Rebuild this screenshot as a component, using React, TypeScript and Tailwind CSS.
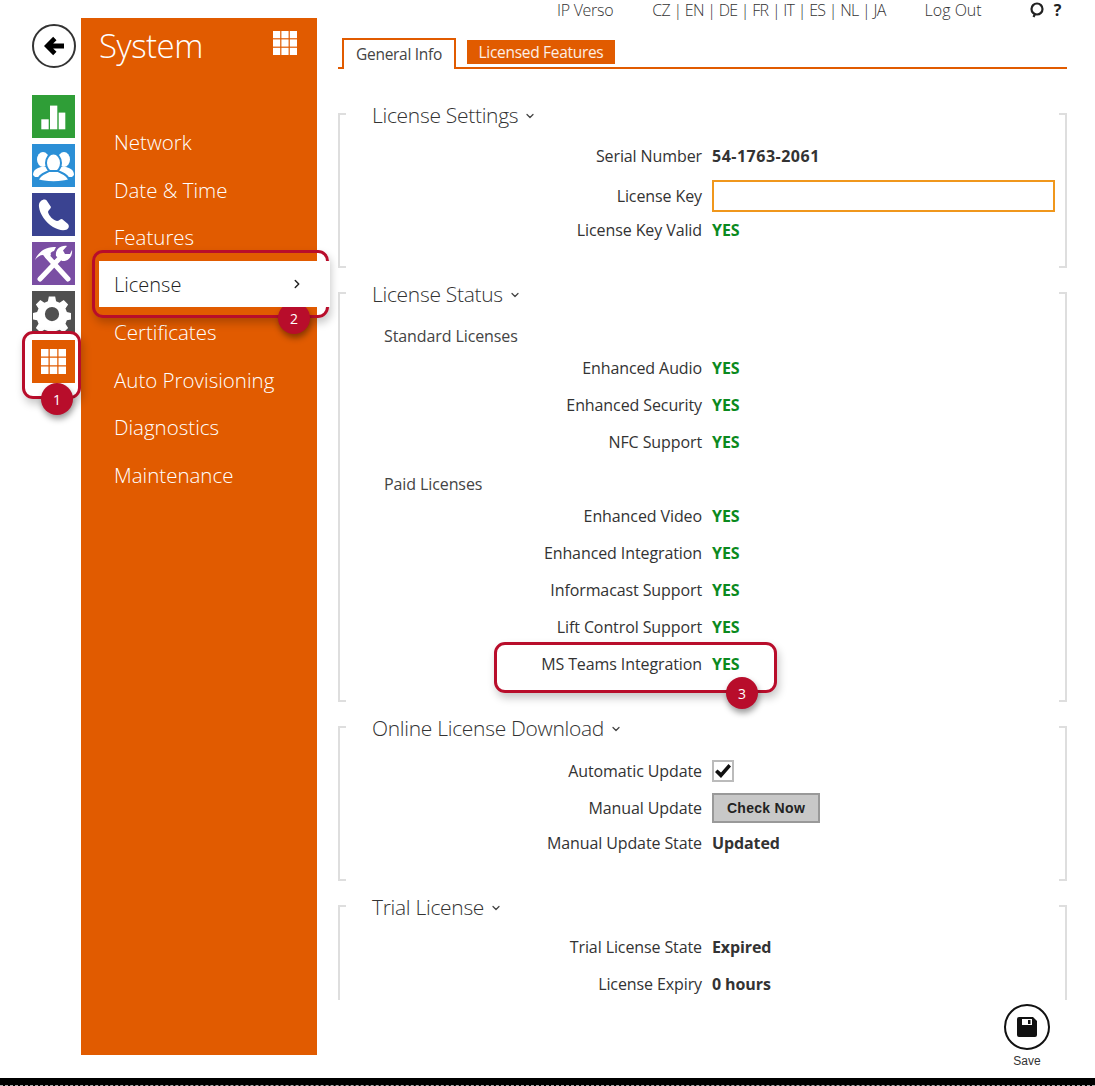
import React from 'react';
import { ChevronDown, ChevronRight } from 'lucide-react';

const FONT = "font-['Open_Sans','Noto_Sans',sans-serif]";

const GridIcon = ({ size }: { size: number }) => (
  <svg width={size} height={size} viewBox="0 0 24 24" fill="#fff">
    {[0, 8.4, 16.8].map((y) =>
      [0, 8.4, 16.8].map((x) => <rect key={`${x}-${y}`} x={x} y={y} width="7.2" height="7.2" />),
    )}
  </svg>
);

const Badge = ({ n, className }: { n: number; className: string }) => (
  <div
    className={`absolute flex h-8 w-8 items-center justify-center rounded-full bg-[#b80d2b] text-[14px] text-white shadow-[1px_4px_6px_rgba(0,0,0,0.4)] ${className}`}
  >
    {n}
  </div>
);

const Callout = ({ className }: { className: string }) => (
  <div
    className={`absolute rounded-[11px] border-[3px] border-[#b80d2b] shadow-[2px_5px_8px_rgba(0,0,0,0.22)] ${className}`}
  />
);

const Row = ({ label, value, h = 37 }: { label: string; value?: React.ReactNode; h?: number }) => (
  <div className="flex items-center" style={{ height: h }}>
    <div className="w-[372px] pr-[10px] text-right text-[16px] tracking-[-0.1px] text-[#333]">{label}</div>
    <div className="flex-1 text-[16px] font-bold tracking-[-0.1px] text-[#333]">{value}</div>
  </div>
);

const Yes = () => <span className="text-[#0b8a1e]">YES</span>;

const Section = ({
  title,
  height,
  ticks = true,
  children,
}: {
  title: string;
  height: number;
  ticks?: boolean;
  children: React.ReactNode;
}) => (
  <div className="relative border-x-2 border-[#dedede]" style={{ height }}>
    <div className="absolute left-0 top-0 h-[2px] w-[6px] bg-[#dedede]" />
    <div className="absolute right-0 top-0 h-[2px] w-[6px] bg-[#dedede]" />
    {ticks && (
      <>
        <div className="absolute bottom-0 left-0 h-[2px] w-[6px] bg-[#dedede]" />
        <div className="absolute bottom-0 right-0 h-[2px] w-[6px] bg-[#dedede]" />
      </>
    )}
    <div className="-mt-[8px] flex items-center pl-[32px] text-[21px] font-light leading-[20px] tracking-[-0.3px] text-[#333]">
      {title}
      <ChevronDown size={12} strokeWidth={2.5} className="ml-[6px] mt-[1px] text-[#444]" />
    </div>
    {children}
  </div>
);

const SideIcon = ({ color, children }: { color: string; children: React.ReactNode }) => (
  <div className={`flex h-[43px] w-[43px] items-center justify-center ${color}`}>{children}</div>
);

const nav = ['Network', 'Date & Time', 'Features', 'License', 'Certificates', 'Auto Provisioning', 'Diagnostics', 'Maintenance'];

export default function App() {
  return (
    <div className={`relative flex h-[1086px] w-[1095px] flex-col overflow-hidden bg-white ${FONT}`}>
      <div className="flex flex-1">
        {/* icon rail */}
        <div className="flex w-[81px] flex-col items-start pl-[32px] pt-[24px]">
          <div className="flex h-[44px] w-[44px] items-center justify-center rounded-full border-2 border-[#333]">
            <svg width="22" height="20" viewBox="0 0 26 24" fill="#000">
              <path d="M12 1 L16 5 L12 9 H25 V15 H12 L16 19 L12 23 L1 12 Z" />
            </svg>
          </div>
          <div className="mt-[27px] flex flex-col gap-[6px]">
            <SideIcon color="bg-[#2f9e37]">
              <svg width="43" height="43" viewBox="0 0 43 43" fill="#fff">
                <rect x="9.3" y="24.3" width="7.4" height="10" />
                <rect x="18" y="10.6" width="7.3" height="23.7" />
                <rect x="26.7" y="17.6" width="6.6" height="16.7" />
              </svg>
            </SideIcon>
            <SideIcon color="bg-[#2b8fd6]">
              <svg width="43" height="43" viewBox="0 0 43 43" fill="#fff">
                <ellipse cx="11" cy="15.5" rx="6" ry="7.5" />
                <ellipse cx="32" cy="15.5" rx="6" ry="7.5" />
                <path d="M1 31c0-5 4-7 8-8h5l4 6-4 4H3z" />
                <path d="M42 31c0-5-4-7-8-8h-5l-4 6 4 4h11z" />
                <ellipse cx="21.5" cy="19" rx="7.5" ry="9.5" stroke="#2b8fd6" strokeWidth="2" />
                <path d="M6 36c1-6 8-7 11-9h9c3 2 10 3 11 9-6 3-25 3-31 0z" stroke="#2b8fd6" strokeWidth="2" />
              </svg>
            </SideIcon>
            <SideIcon color="bg-[#3a4391]">
              <svg width="43" height="43" viewBox="0 0 43 43" fill="#fff">
                <path d="M9 8C11 6 14 6 15 8L19 14C19 16 16 17 16 19C17 23 21 27 25 28C27 28 28 26 30 26L36 31C37.5 33 37 35 35 36.5C31 38 26 37 21 34C13 29 8 21 7 14C6.5 11 7.5 9 9 8Z" />
              </svg>
            </SideIcon>
            <SideIcon color="bg-[#7a4ea3]">
              <svg width="43" height="43" viewBox="0 0 43 43" fill="#fff">
                <path d="M3 18C6 10 14 4 24 5L22 9C19 10 18 11 19 13L15 17L11 13C8 13 5 15 3 18Z" />
                <path d="M15 14L36 37M8 37L27 17" stroke="#fff" strokeWidth="5" strokeLinecap="round" />
                <path d="M24 14C23 8 28 3 35 4L31 8.5L33 12L38 12L40 8C41 14 36 20 30 19Z" />
              </svg>
            </SideIcon>
            <SideIcon color="bg-[#505050]">
              <svg width="38" height="38" viewBox="0 0 24 24" fill="#fff" fillRule="evenodd" className="-ml-[3px] mt-[3px]">
                <path d="M10 1h4l.6 3 2.2.9 2.6-1.7 2.8 2.8-1.7 2.6.9 2.2 3 .6v4l-3 .6-.9 2.2 1.7 2.6-2.8 2.8-2.6-1.7-2.2.9-.6 3h-4l-.6-3-2.2-.9-2.6 1.7-2.8-2.8 1.7-2.6-.9-2.2-3-.6v-4l3-.6.9-2.2-1.7-2.6 2.8-2.8 2.6 1.7 2.2-.9zM12 7.5a4.5 4.5 0 1 0 0 9 4.5 4.5 0 0 0 0-9z" />
              </svg>
            </SideIcon>
            <SideIcon color="bg-[#e15b00]">
              <GridIcon size={25} />
            </SideIcon>
          </div>
        </div>

        {/* orange menu */}
        <div className="mt-[18px] flex h-[1037px] w-[236px] flex-col bg-[#e15b00] text-white">
          <div className="flex h-[56px] items-center justify-between pl-[18px] pr-[20px]">
            <span className="text-[33px] font-light tracking-[-0.5px]">System</span>
            <div className="-mt-[6px]">
              <GridIcon size={24} />
            </div>
          </div>
          <div className="mt-[44px] flex flex-col pl-[18px]">
            {nav.map((item) =>
              item === 'License' ? (
                <div
                  key={item}
                  className="relative z-10 mb-[1.5px] flex h-[46px] w-[231px] items-center justify-between bg-white pl-[15px] pr-[26px] pt-[2px] text-[20px] font-light text-[#222]"
                >
                  {item}
                  <ChevronRight size={14} strokeWidth={2.5} className="-mt-[2px] text-[#222]" />
                </div>
              ) : (
                <div key={item} className="flex h-[47.5px] items-center pl-[15px] pt-[2px] text-[20.5px] font-light">
                  {item}
                </div>
              ),
            )}
          </div>
        </div>

        {/* content */}
        <div className="relative flex flex-1 flex-col pl-[21px] pr-[28px]">
          <div className="-mt-[1px] flex h-[21px] items-center justify-end text-[16px] font-light tracking-[-0.3px] text-[#333]">
            <span>IP Verso</span>
            <span className="ml-[39px] tracking-[-0.7px]">CZ | EN | DE | FR | IT | ES | NL | JA</span>
            <span className="ml-[39px] tracking-normal">Log Out</span>
            <svg width="16" height="16" viewBox="0 0 16 16" fill="none" stroke="#222" strokeWidth="2.2" className="ml-[47px]">
              <circle cx="8" cy="7" r="5.5" />
              <path d="M6 12l-1.5 3" />
            </svg>
            <span className="ml-[9px] mr-[6px] font-bold text-[#222]">?</span>
          </div>

          <div className="mt-[18px] flex h-[31px] items-end border-b-2 border-[#e15b00] pl-[4px]">
            <div className="relative -mb-[2px] flex h-[31px] w-[114px] items-center justify-center border-2 border-b-0 border-[#e15b00] bg-white text-[15.5px] tracking-[-0.3px] text-[#444]">
              General Info
            </div>
            <div className="mb-[3px] ml-[11px] flex h-[24px] w-[148px] items-center justify-center bg-[#e15b00] pt-[2px] text-[15.5px] tracking-[-0.3px] text-white/90">
              Licensed Features
            </div>
          </div>

          <div className="mt-[44px] flex flex-col gap-[24px]">
            <Section title="License Settings" height={155}>
              <div className="mt-[12px]">
                <Row label="Serial Number" value={<span className="tracking-[0.5px]">54-1763-2061</span>} />
                <Row
                  label="License Key"
                  h={43}
                  value={<div className="h-[32px] w-[343px] border-2 border-[#f0971c] bg-white" />}
                />
                <Row label="License Key Valid" value={<Yes />} h={25} />
              </div>
            </Section>

            <Section title="License Status" height={410}>
              <div className="mt-[20px] pl-[44px] text-[16px] leading-[25px] tracking-[-0.1px] text-[#444]">Standard Licenses</div>
              <div>
                <Row label="Enhanced Audio" value={<Yes />} />
                <Row label="Enhanced Security" value={<Yes />} />
                <Row label="NFC Support" value={<Yes />} />
              </div>
              <div className="mt-[12px] pl-[44px] text-[16px] leading-[25px] tracking-[-0.1px] text-[#444]">Paid Licenses</div>
              <div>
                <Row label="Enhanced Video" value={<Yes />} />
                <Row label="Enhanced Integration" value={<Yes />} />
                <Row label="Informacast Support" value={<Yes />} />
                <Row label="Lift Control Support" value={<Yes />} />
                <Row label="MS Teams Integration" value={<Yes />} />
              </div>
            </Section>

            <Section title="Online License Download" height={155}>
              <div className="mt-[14px]">
                <Row
                  label="Automatic Update"
                  h={38}
                  value={
                    <div className="flex h-[22px] w-[22px] items-center justify-center border-2 border-[#bbb] bg-white">
                      <svg width="16" height="14" viewBox="0 0 16 14" fill="#111">
                        <path d="M0 8l2.5-2.5L6 8.5 13.5 0 16 2.5 6 14z" />
                      </svg>
                    </div>
                  }
                />
                <Row
                  label="Manual Update"
                  h={36}
                  value={
                    <div className="flex h-[30px] w-[108px] items-center justify-center border-2 border-[#999] bg-[#c8c8c8] font-['Liberation_Sans',sans-serif] text-[14px] font-bold tracking-[0.3px] text-[#222]">
                      Check Now
                    </div>
                  }
                />
                <Row label="Manual Update State" value="Updated" h={34} />
              </div>
            </Section>

            <Section title="Trial License" height={95} ticks={false}>
              <div className="mt-[11px]">
                <Row label="Trial License State" value="Expired" />
                <Row label="License Expiry" value="0 hours" />
              </div>
            </Section>
          </div>

          <div className="absolute right-[45px] top-[1004px] flex flex-col items-center">
            <div className="flex h-[46px] w-[46px] items-center justify-center rounded-full border-2 border-[#111] bg-white">
              <svg width="22" height="22" viewBox="0 0 22 22" fill="#111">
                <path d="M3 1h14l4 4v14a2 2 0 0 1-2 2H3a2 2 0 0 1-2-2V3a2 2 0 0 1 2-2zM6 3v6h10V3zM12 4h2.5v4H12z" fillRule="evenodd" />
              </svg>
            </div>
            <span className="mt-[2px] font-['Liberation_Sans',sans-serif] text-[12px] text-[#333]">Save</span>
          </div>
        </div>
      </div>

      <div className="h-[8px] border-b border-dashed border-[#aaa] bg-black" />

      {/* numbered callouts */}
      <Callout className="left-[22px] top-[331px] h-[68px] w-[59px]" />
      <Callout className="left-[92px] top-[250px] h-[68px] w-[237px]" />
      <Callout className="left-[494px] top-[642px] h-[51px] w-[283px]" />
      <Badge n={1} className="left-[41px] top-[383px]" />
      <Badge n={2} className="left-[278px] top-[302px]" />
      <Badge n={3} className="left-[726px] top-[677px]" />
    </div>
  );
}
